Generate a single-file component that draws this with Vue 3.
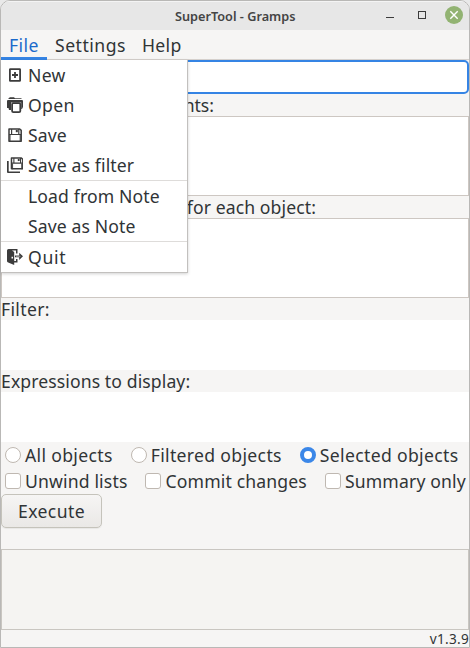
<script setup>
import { ref } from 'vue'

const menus = [
  { name: 'File', cls: 'm-file' },
  { name: 'Settings', cls: 'm-settings' },
  { name: 'Help', cls: 'm-help' },
]
const entries = [
  { label: 'New', icon: 'new' },
  { label: 'Open', icon: 'open' },
  { label: 'Save', icon: 'save' },
  { label: 'Save as filter', icon: 'saveas' },
  { label: 'Load from Note', sep: true },
  { label: 'Save as Note' },
  { label: 'Quit', icon: 'quit', sep: true },
]
const scopes = ['All objects', 'Filtered objects', 'Selected objects']
const options = ['Unwind lists', 'Commit changes', 'Summary only']
const scope = ref('Selected objects')
</script>

<template>
  <div class="desk">
    <div class="window">
      <header class="titlebar">
        <span class="title">SuperTool - Gramps</span>
        <svg class="controls" width="84" height="21" viewBox="0 0 84 21">
          <path d="M6 12.5h8" stroke="#3c3c3c" fill="none" />
          <rect x="38.5" y="6.5" width="7" height="7" stroke="#3c3c3c" fill="none" />
          <circle cx="74" cy="10" r="9" fill="#92b372" />
          <path d="M70.3 6.3l7.4 7.4M77.7 6.3l-7.4 7.4" stroke="#fff" stroke-width="1.4" />
        </svg>
      </header>
      <nav class="menubar">
        <span v-for="m in menus" :key="m.name" class="menu" :class="m.cls">{{ m.name }}</span>
      </nav>
      <div class="entry"></div>
      <div class="label init">nts:</div>
      <div class="area"></div>
      <div class="label each">for each object:</div>
      <div class="area"></div>
      <div class="label filter">Filter:</div>
      <div class="plain"></div>
      <div class="label expr">Expressions to display:</div>
      <div class="plain"></div>
      <div class="choices radios">
        <span v-for="s in scopes" :key="s" class="choice">
          <i class="radio" :class="{ on: s === scope }"></i><span>{{ s }}</span>
        </span>
      </div>
      <div class="choices checks">
        <span v-for="o in options" :key="o" class="choice"><i class="check"></i><span>{{ o }}</span></span>
      </div>
      <button class="execute">Execute</button>
      <div class="output"></div>
      <footer class="status">v1.3.9</footer>
    </div>

    <div class="dropdown">
      <div v-for="e in entries" :key="e.label" class="item" :class="[{ sep: e.sep }, e.icon]">
        <svg class="icon" width="16" height="16" viewBox="0 0 16 16">
          <g v-if="e.icon === 'new'" fill="none" stroke="#3c3c3c" stroke-width="1.8">
            <rect x="2.9" y="2.1" width="10.2" height="11.8" rx=".5" />
            <path d="M5 8h6M8 5v6" />
          </g>
          <g v-else-if="e.icon === 'open'">
            <path fill="#3c3c3c" d="M1.5 2V1.2L3 .3h4l1 1h6.5V2z" />
            <path fill="#3c3c3c" d="M0 4q0-1 1-1h14q1 0 1 1v6l-1 2h-.8V5.5H4V13H2L1.5 11H0z" />
            <rect x="5.1" y="6.1" width="8.2" height="9" rx="1.2" fill="#fff" stroke="#3c3c3c" stroke-width="1.8" />
            <path d="M7.3 8.2h3.8v5H7.3z" fill="#fff" stroke="#fff" stroke-width=".3" />
          </g>
          <g v-else-if="e.icon === 'save'">
            <path d="M2 2h10.7L14.2 3.4V14.2H2z" fill="none" stroke="#3c3c3c" stroke-width="1.5" stroke-linejoin="round" />
            <path d="M2 7.5h12M4.6 2v5M11.8 2v5" fill="none" stroke="#3c3c3c" stroke-width="1.2" />
            <path d="M8.8 3h2v2.2h-2z" fill="#3c3c3c" />
            <path d="M3 8v6M13.2 8v6" stroke="#3c3c3c" />
          </g>
          <g v-else-if="e.icon === 'saveas'">
            <path fill="#3c3c3c" d="M0 4h1.7v10.4H13V16H1q-1 0-1-1z" />
            <g transform="translate(2.6 -.8) scale(.93)">
              <path d="M2 2h10.7L14.2 3.4V13.6H2z" fill="none" stroke="#3c3c3c" stroke-width="1.6" stroke-linejoin="round" />
              <path d="M2 7.5h12M4.6 2v5M11.8 2v5" fill="none" stroke="#3c3c3c" stroke-width="1.2" />
              <path d="M8.8 3h2v2.2h-2z" fill="#3c3c3c" />
              <path d="M3.2 8v6M13 8v6" stroke="#3c3c3c" />
            </g>
          </g>
          <g v-else-if="e.icon === 'quit'" fill="#3c3c3c">
            <path fill-rule="evenodd" d="M0 1.5Q0 0 1.5 0H10.5v4.5H9V1.5H5L7.2 3v13l-6-2.5q-1.2-.4-1.2-1.5zM4.5 7.8v1.7H6V7.8z" />
            <path d="M7 12h2v-2h1.5v3.5H7z" />
            <path d="M8 6.4h4.2V3.7L16 7.3l-3.8 3.6V8.2H8z" />
            <path d="M9 7.3h4.5" stroke="#fff" stroke-width=".5" />
          </g>
        </svg>
        <span>{{ e.label }}</span>
      </div>
    </div>
  </div>
</template>

<style>
body { margin: 0; background: #c9c9c9; }
</style>

<style scoped>
* { box-sizing: border-box; }
.desk {
  position: relative;
  width: 470px;
  height: 648px;
  overflow: hidden;
  background: #e9e9e9;
  color: #303436;
  font: 17.6px/22px "Noto Sans", sans-serif;
  white-space: nowrap;
}
.window {
  display: flex;
  flex-direction: column;
  height: 648px;
  border: 1px solid #b9b8b6;
  border-radius: 10px 10px 0 0;
  background: #f6f5f4;
  overflow: hidden;
}
.titlebar {
  display: flex;
  align-items: center;
  justify-content: flex-end;
  height: 29px;
  padding-right: 5px;
  background: #e7e7e7;
  box-shadow: inset 0 1px #f4f4f4;
}
.title { flex: 1; padding-left: 174px; font-size: 12.7px; font-weight: 600; line-height: 28px; color: #444; }
.controls { display: block; }
.menubar { display: flex; height: 30px; border-bottom: 1px solid #d5d0cc; }
.menu { height: 30px; padding: 0 8px; line-height: 31px; }
.m-file { width: 46px; color: #1b6acb; border-bottom: 3px solid #3584e4; letter-spacing: .4px; }
.m-settings { width: 87px; letter-spacing: .5px; }
.m-help { letter-spacing: .3px; }
.entry { height: 34px; border: 2px solid #3584e4; border-radius: 5px; background: #fff; }
.label { height: 22px; line-height: 23px; }
.init { width: 213px; text-align: right; }
.each { width: 315px; text-align: right; letter-spacing: .1px; }
.filter { letter-spacing: .35px; }
.expr { letter-spacing: .1px; }
.area { height: 80px; border: 1px solid #cdc7c2; background: #fff; }
.plain { height: 50px; background: #fff; }
.choices { display: flex; gap: 18px; height: 26px; padding-left: 4px; align-items: center; }
.choice { display: flex; align-items: center; gap: 4px; }
.radios { letter-spacing: .33px; }
.checks { letter-spacing: .15px; }
.radio, .check { width: 16px; height: 16px; border: 1px solid #bfb8b1; background: #fff; }
.radio { border-radius: 50%; }
.check { border-radius: 3px; }
.radio.on { border: 4px solid #3b87e8; }
.execute {
  width: 101px;
  height: 34px;
  padding: 0;
  border: 1px solid #c5c3bb;
  border-radius: 5px;
  background: linear-gradient(#f6f5f4, #eae8e6);
  box-shadow: 0 1px 1px #0000000f;
  color: inherit;
  font: inherit;
  letter-spacing: .4px;
}
.output { height: 81px; margin-top: 21px; border: 1px solid #c9c6c1; background: #f5f4f2; }
.status { height: 17px; font-size: 13.6px; line-height: 17px; letter-spacing: .3px; text-align: right; }
.dropdown {
  position: absolute;
  left: 1px;
  top: 60px;
  width: 187px;
  height: 213px;
  border: solid #c2c0be;
  border-width: 0 1px 1px 0;
  background: #fff;
  box-shadow: 0 1px 3px #0000002e;
  letter-spacing: .12px;
}
.item { display: flex; align-items: center; height: 30px; padding-left: 6px; gap: 5px; }
.item.sep { height: 31px; border-top: 1px solid #dedcda; }
.item.open, .item.new { letter-spacing: .3px; }
.item.quit { letter-spacing: .7px; }
.icon { flex: none; }
</style>
